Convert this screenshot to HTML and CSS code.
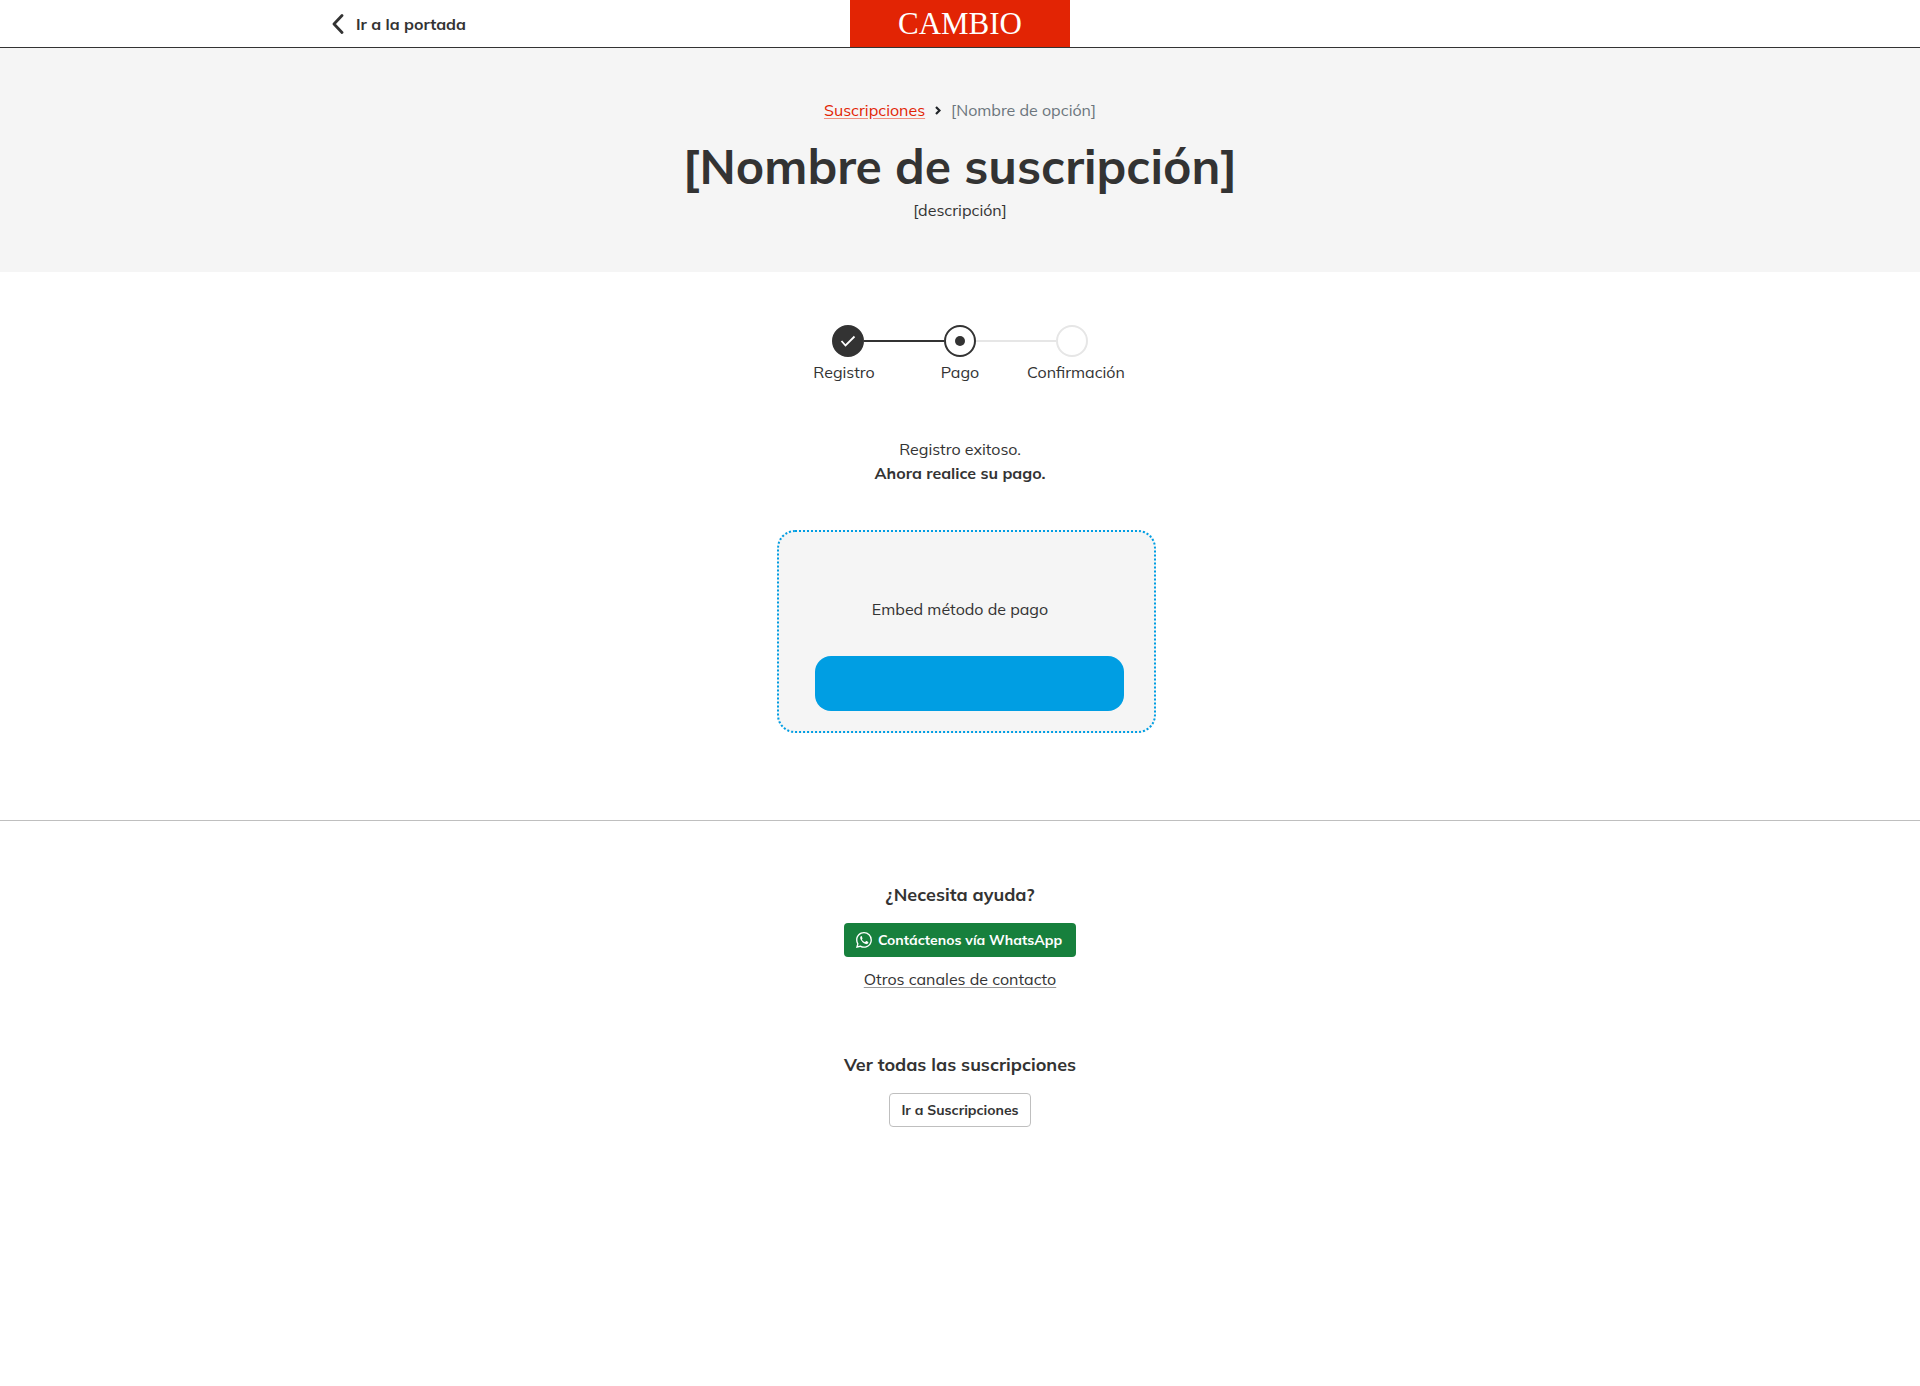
FILE: index.html
```html
<!DOCTYPE html>
<html lang="es">
<head>
  <meta charset="UTF-8" />
  <meta name="viewport" content="width=device-width, initial-scale=1.0" />
  <title>Pago | CAMBIO</title>
  <link rel="stylesheet" href="styles.css">
</head>
<body>
  <header class="topbar">
    <div class="topbar-side">
      <a class="back-link" href="#">
        <svg width="12" height="20" viewBox="0 0 12 20" fill="none" stroke="currentColor" stroke-width="2.8" stroke-linecap="round" stroke-linejoin="round" aria-hidden="true"><path d="M10 1.500L2 10l8 8.500"/></svg>
        <span>Ir a la portada</span>
      </a>
    </div>
    <a class="logo" href="#">CAMBIO</a>
  </header>

  <section class="hero">
    <nav class="breadcrumb">
      <a href="#">Suscripciones</a>
      <svg width="6" height="9" viewBox="0 0 6 9" fill="none" stroke="#212529" stroke-width="2.200" aria-hidden="true"><path d="M1 1l3.500 3.500L1 8"/></svg>
      <span>[Nombre de opción]</span>
    </nav>
    <h1>[Nombre de suscripción]</h1>
    <p>[descripción]</p>
  </section>

  <main class="payment">
    <div class="steps">
      <div class="steps-track">
        <span class="dot done">
          <svg width="16" height="16" viewBox="0 0 16 16" fill="none" stroke="#fff" stroke-width="1.800" aria-hidden="true"><path d="M1.500 8l4 4.500L14.500 3.500"/></svg>
        </span>
        <span class="line active"></span>
        <span class="dot current"></span>
        <span class="line"></span>
        <span class="dot"></span>
      </div>
      <ol class="steps-labels">
        <li>Registro</li>
        <li>Pago</li>
        <li>Confirmación</li>
      </ol>
    </div>

    <p class="message">Registro exitoso.<br><strong>Ahora realice su pago.</strong></p>

    <div class="embed-wrap">
      <div class="embed">
        <p>Embed método de pago</p>
        <button type="button" class="pay-button" aria-label="Pagar"></button>
      </div>
    </div>
  </main>

  <footer class="help">
    <h2>¿Necesita ayuda?</h2>
    <a class="btn btn-whatsapp" href="#">
      <svg width="16" height="16" viewBox="0 0 16 16" fill="#fff" aria-hidden="true"><path d="M13.601 2.326A7.854 7.854 0 0 0 7.994 0C3.627 0 .068 3.558.064 7.926c0 1.399.366 2.760 1.057 3.965L0 16l4.204-1.102a7.933 7.933 0 0 0 3.790.965h.004c4.368 0 7.926-3.558 7.930-7.930A7.898 7.898 0 0 0 13.600 2.326zM7.994 14.521a6.573 6.573 0 0 1-3.356-.920l-.240-.144-2.494.654.666-2.433-.156-.251a6.560 6.560 0 0 1-1.007-3.505c0-3.626 2.957-6.584 6.591-6.584a6.560 6.560 0 0 1 4.660 1.931 6.557 6.557 0 0 1 1.928 4.660c-.004 3.639-2.961 6.592-6.592 6.592z"/><path d="M5.400 3.900c-.5.100-1.200.7-1.200 1.800 0 1.300.9 2.500 1.100 2.700.2.300 1.800 2.900 4.500 3.700 1 .3 2.200-.3 2.400-1 .2-.6.200-1 .100-1.100l-1.800-.9c-.3-.100-.4 0-.6.200l-.7.8c-.2.100-.3.100-.5 0-1.400-.6-2.300-1.500-2.800-2.500-.100-.2 0-.3.100-.4.300-.3.500-.6.500-.8L5.800 4.200c-.100-.2-.2-.3-.4-.3z"/></svg>
      <span>Contáctenos vía WhatsApp</span>
    </a>
    <a class="contact-link" href="#">Otros canales de contacto</a>
    <h2>Ver todas las suscripciones</h2>
    <a class="btn btn-outline" href="#">Ir a Suscripciones</a>
  </footer>
</body>
</html>
```
FILE: styles.css
```css
* {
  box-sizing: border-box;
}

body {
  margin: 0;
  background-color: #fff;
  color: #333;
  font-family: Mulish, Lato, "Open Sans", sans-serif;
  font-size: 16px;
  line-height: 24px;
}

h1, h2, p, ol {
  margin: 0;
}

a {
  color: inherit;
}

/* Top bar */
.topbar {
  display: grid;
  grid-template-columns: 1fr 220px 1fr;
  height: 48px;
  border-bottom: 1px solid #333;
}

.topbar-side {
  display: flex;
  justify-content: flex-end;
}

.back-link {
  display: flex;
  align-items: center;
  gap: 12px;
  width: 518px;
  font-weight: 700;
  text-decoration: none;
}

.logo {
  display: flex;
  align-items: center;
  justify-content: center;
  background-color: #e22404;
  color: #fff;
  font-family: "Liberation Serif", serif;
  font-size: 31px;
  text-decoration: none;
}

/* Hero */
.hero {
  padding: 50px 16px;
  background-color: #f5f5f5;
  text-align: center;
}

.breadcrumb {
  display: flex;
  align-items: center;
  justify-content: center;
  gap: 10px;
  color: #6c757d;
}

.breadcrumb a {
  color: #e22404;
  text-underline-offset: 2px;
  text-decoration-color: #f09080;
}

.hero h1 {
  margin: 16px 0 4px;
  font-size: 48px;
  line-height: 56px;
}

/* Steps */
.payment {
  padding: 53px 16px 87px;
  border-bottom: 1px solid #bfbfbf;
  text-align: center;
}

.steps-track {
  display: flex;
  align-items: center;
  width: 256px;
  margin: 0 auto;
}

.dot {
  display: flex;
  align-items: center;
  justify-content: center;
  width: 32px;
  height: 32px;
  border: 2px solid #e6e6e6;
  border-radius: 50%;
}

.dot.done {
  border-color: #333;
  background-color: #333;
}

.dot.current {
  border-color: #333;
}

.dot.current::before {
  content: "";
  width: 10px;
  height: 10px;
  border-radius: 50%;
  background-color: #333;
}

.line {
  flex: 1;
  height: 2px;
  background-color: #e6e6e6;
}

.line.active {
  background-color: #333;
}

.steps-labels {
  display: grid;
  grid-template-columns: repeat(3, 116px);
  justify-content: center;
  margin-top: 3px;
  padding: 0;
  list-style: none;
}

.message {
  margin-top: 53px;
}

/* Payment embed */
.embed-wrap {
  display: flex;
  justify-content: center;
  padding-left: 13px;
}

.embed {
  width: 379px;
  margin-top: 45px;
  padding: 65px 30px 20px 36px;
  border: 2px dotted #009ee3;
  border-radius: 18px;
  background-color: #f5f5f5;
}

.embed p {
  padding-right: 19px;
}

.pay-button {
  display: block;
  width: 100%;
  height: 55px;
  margin-top: 35px;
  border: 0;
  border-radius: 16px;
  background-color: #009ee3;
}

/* Help */
.help {
  display: flex;
  flex-direction: column;
  align-items: center;
  padding: 62px 16px;
}

.help h2 {
  margin-bottom: 16px;
  font-size: 18px;
  line-height: 24px;
}

.btn {
  display: flex;
  align-items: center;
  gap: 6px;
  height: 34px;
  padding: 0 11px;
  border: 1px solid transparent;
  border-radius: 4px;
  font-size: 14px;
  font-weight: 700;
  text-decoration: none;
}

.btn-whatsapp {
  padding-right: 13px;
  background-color: #17803d;
  color: #fff;
}

.btn-outline {
  border-color: #bfbfbf;
}

.contact-link {
  margin: 10px 0 62px;
  text-underline-offset: 2px;
  text-decoration-color: #999;
}
```
